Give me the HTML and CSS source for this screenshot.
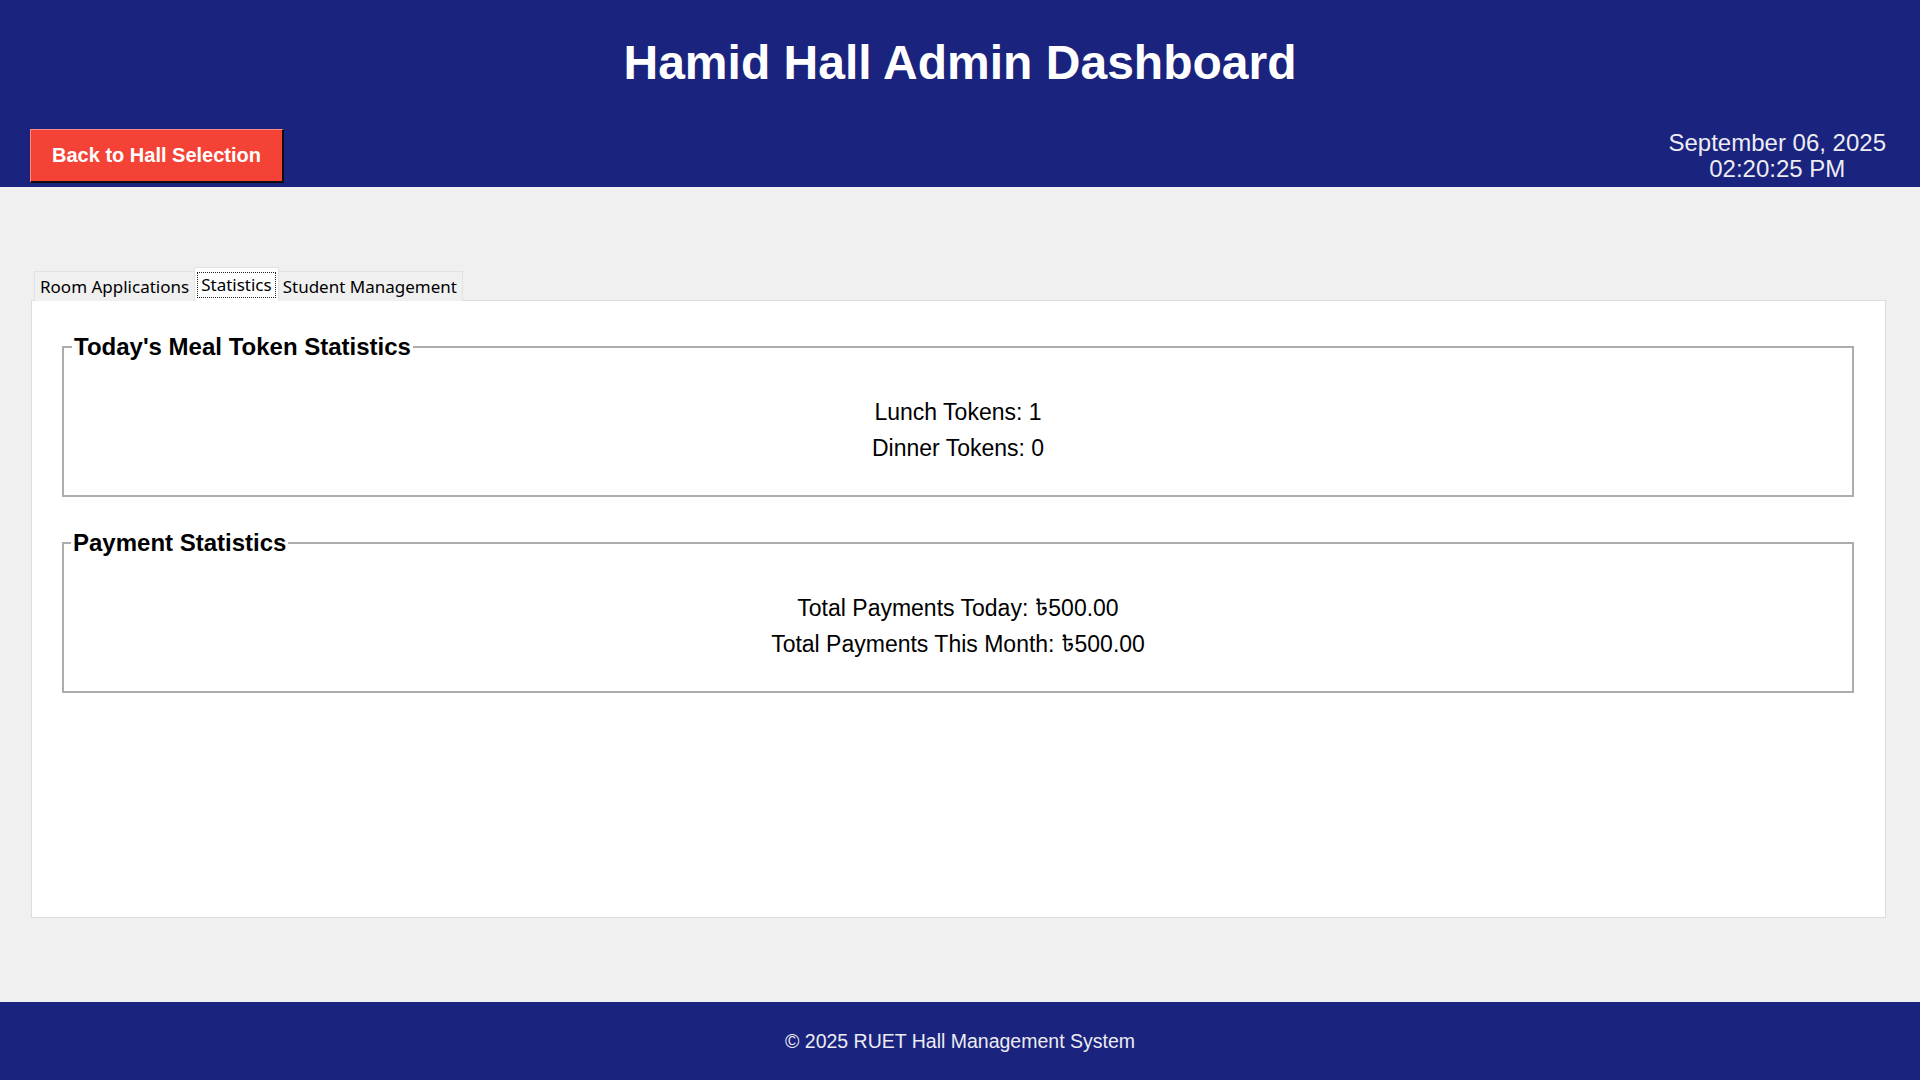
FILE: index.html
```html
<!DOCTYPE html>
<html lang="en">
<head>
<meta charset="utf-8">
<title>Hamid Hall Admin Dashboard</title>
<link rel="stylesheet" href="styles.css">
</head>
<body>
<div class="app">
  <header class="topbar">
    <h1 class="title">Hamid Hall Admin Dashboard</h1>
    <div class="toprow">
      <button class="back-btn" type="button">Back to Hall Selection</button>
      <div class="clock">
        <div class="clock-line">September 06, 2025</div>
        <div class="clock-line">02:20:25 PM</div>
      </div>
    </div>
  </header>

  <main class="content">
    <div class="notebook">
      <div class="tabs">
        <div class="tab">Room Applications</div>
        <div class="tab tab-active"><span class="focus">Statistics</span></div>
        <div class="tab">Student Management</div>
      </div>
      <div class="pane">
        <fieldset class="group">
          <legend class="group-label">Today's Meal Token Statistics</legend>
          <div class="stat">Lunch Tokens: 1</div>
          <div class="stat">Dinner Tokens: 0</div>
        </fieldset>
        <fieldset class="group">
          <legend class="group-label group-label-b">Payment Statistics</legend>
          <div class="stat">Total Payments Today: <span class="taka">৳</span>500.00</div>
          <div class="stat">Total Payments This Month: <span class="taka">৳</span>500.00</div>
        </fieldset>
      </div>
    </div>
  </main>

  <footer class="footer">© 2025 RUET Hall Management System</footer>
</div>
</body>
</html>
```

FILE: styles.css
```css
* { box-sizing: border-box; }

html, body {
  margin: 0;
  padding: 0;
}

body {
  width: 1920px;
  height: 1080px;
  overflow: hidden;
  font-family: "Liberation Sans", Arial, sans-serif;
  background: #f0f0f0;
}

.app {
  display: flex;
  flex-direction: column;
  height: 1080px;
}

/* ---------- header ---------- */
.topbar {
  height: 187px;
  background: #1a237e;
  display: flex;
  flex-direction: column;
  padding: 39px 0 0 0;
}

.title {
  margin: 0;
  height: 48px;
  line-height: 48px;
  font-size: 48px;
  font-weight: bold;
  color: #ffffff;
  text-align: center;
}

.toprow {
  margin-top: 42px;
  display: flex;
  align-items: center;
  justify-content: space-between;
  padding: 0 34px 0 30px;
}

.back-btn {
  width: 254px;
  height: 54px;
  background: #f44336;
  color: #ffffff;
  font-family: "Liberation Sans", Arial, sans-serif;
  font-size: 20px;
  font-weight: bold;
  border-style: solid;
  border-width: 1px 2px 2px 1px;
  border-color: #f88b84 #0d0d0d #0d0d0d #f88b84;
  padding: 0;
  cursor: pointer;
}

.clock {
  text-align: center;
  color: #ececf2;
  font-size: 24px;
  line-height: 26px;
}

/* ---------- content ---------- */
.content {
  flex: 1;
  background: #f0f0f0;
  padding: 81px 34px 84px 31px;
  display: flex;
}

.notebook {
  flex: 1;
  display: flex;
  flex-direction: column;
}

.tabs {
  display: flex;
  align-items: flex-end;
  padding-left: 3px;
  height: 33px;
  position: relative;
  z-index: 1;
  margin-bottom: -1px;
}

.tab {
  height: 30px;
  padding: 0 5px;
  font-family: "Noto Sans", "Open Sans", sans-serif;
  font-size: 17px;
  line-height: 29px;
  color: #000;
  background: #f0f0f0;
  border: 1px solid #e2e2e2;
  border-bottom: none;
  white-space: nowrap;
}

.tab + .tab { margin-left: -1px; }

.tab-active {
  height: 34px;
  margin: 0 -2px 0 -3px;
  padding: 2px 2px 0 2px;
  background: #ffffff;
  line-height: 29px;
  position: relative;
  z-index: 2;
}

.tab-active + .tab { margin-left: 0; }

.focus {
  display: inline-block;
  height: 26px;
  line-height: 23px;
  padding: 0 3px;
  border: 1px dotted #222;
}

.pane {
  flex: 1;
  background: #ffffff;
  border: 1px solid #dcdcdc;
  padding: 32px 31px 0 30px;
  display: flex;
  flex-direction: column;
  gap: 32px;
}

.group {
  margin: 0;
  padding: 33px 0 29px 0;
  border: 2px solid #adadad;
  min-width: 0;
  text-align: center;
}

.group-label {
  margin-left: 8px;
  padding: 0 2px;
  font-size: 24px;
  font-weight: bold;
  line-height: 28px;
  color: #000;
  text-align: left;
}

.group-label-b { margin-left: 7px; }

.stat {
  font-size: 23px;
  line-height: 36px;
  height: 36px;
  color: #000;
}

.taka {
  line-height: 0;
  font-family: "Noto Sans Bengali", "Noto Serif Bengali", "Lohit Bengali", "FreeSerif", "DejaVu Sans", "Liberation Sans", sans-serif;
}

/* ---------- footer ---------- */
.footer {
  height: 78px;
  background: #1a237e;
  color: #ececf2;
  font-size: 19.5px;
  line-height: 78px;
  text-align: center;
}
```
